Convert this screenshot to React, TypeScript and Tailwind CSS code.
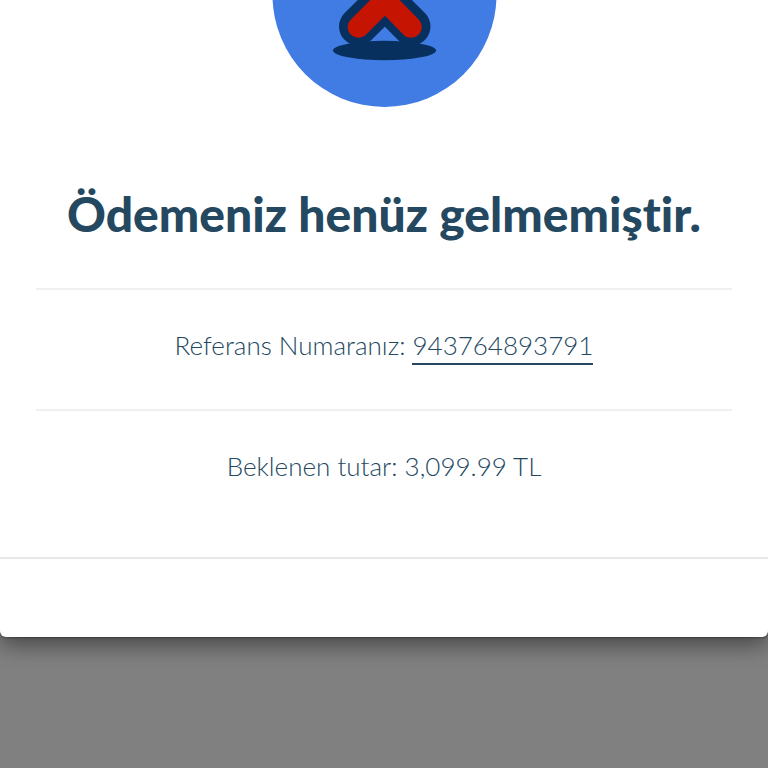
const payment = {
  title: 'Ödemeniz henüz gelmemiştir.',
  reference: '943764893791',
  amount: '3,099.99 TL',
};

function FailedIcon() {
  return (
    <svg width="226" height="108" viewBox="0 0 226 108" className="block" aria-hidden="true">
      <circle cx="113.5" cy="-5" r="112" fill="#417ce4" />
      <ellipse cx="113.5" cy="50.5" rx="51.5" ry="9.7" fill="#08305f" />
      <g fill="none" strokeLinecap="round">
        <path d="M87 -27 L140.5 26.5 M141 -27 L87 26.5" stroke="#08305f" strokeWidth="38" />
        <path d="M114 0.5 L140 27 M114 0.5 L87.5 27 M114 0 V-20" stroke="#c61402" strokeWidth="21.5" />
      </g>
    </svg>
  );
}

export default function App() {
  return (
    <div className="min-h-screen bg-[#808080] font-['Lato',sans-serif] text-[#24485f]">
      <section
        role="dialog"
        aria-labelledby="payment-title"
        className="rounded-b-md bg-white shadow-[0_8px_22px_rgba(0,0,0,0.45),0_1px_2px_rgba(0,0,0,0.3)]"
      >
        <div className="px-9 pb-18 text-center">
          <div className="flex justify-center">
            <FailedIcon />
          </div>
          <h1
            id="payment-title"
            className="pt-19 pb-11 text-[48px] leading-[60px] font-black whitespace-nowrap [font-variant-ligatures:none]"
          >
            {payment.title}
          </h1>
          <p className="border-t-2 border-[#f0f0f0] pt-9 pb-11 text-[26px] leading-[38px] font-light">
            Referans Numaranız:{' '}
            <a href="#reference" className="inline-block border-b-2 border-[#24485f] leading-9">
              {payment.reference}
            </a>
          </p>
          <p className="border-t-2 border-[#f0f0f0] pt-9 text-[26px] leading-[38px] font-light">
            Beklenen tutar: {payment.amount}
          </p>
        </div>
        <footer className="h-20 border-t-2 border-[#e8e8e8]" />
      </section>
    </div>
  );
}
